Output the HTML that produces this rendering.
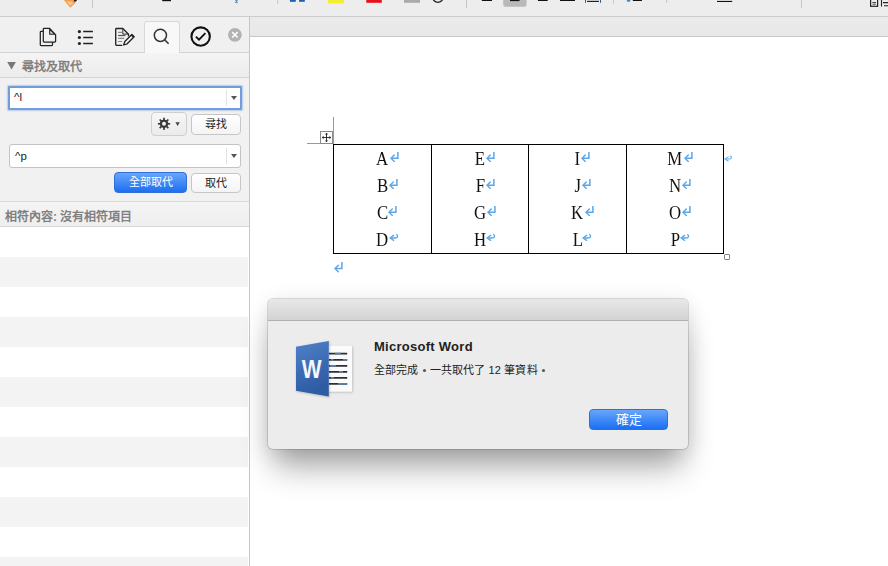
<!DOCTYPE html>
<html lang="zh-TW">
<head>
<meta charset="utf-8">
<style>
*{margin:0;padding:0;box-sizing:border-box;}
html,body{width:888px;height:566px;overflow:hidden;background:#fff;font-family:"Liberation Sans",sans-serif;}
.a{position:absolute;}
#tb{left:0;top:0;width:888px;height:17px;background:#ededed;border-bottom:1px solid #cdcdcd;}
#side{left:0;top:17px;width:250px;height:549px;background:#f1f1f1;border-right:1px solid #c6c6c6;}
#tabs{left:0;top:0;width:249px;height:36px;border-bottom:1px solid #d2d2d2;background:#f0f0f0;}
#stab{left:144px;top:4px;width:36px;height:32px;background:#f8f8f8;border:1px solid #d8d8d8;border-bottom:none;border-radius:3px 3px 0 0;}
#hdr{left:0;top:36px;width:249px;height:25px;background:linear-gradient(#f4f4f4,#ececec);border-bottom:1px solid #d4d4d4;}
#hdr .t{left:22px;top:4px;font-size:12px;font-weight:bold;color:#808080;letter-spacing:0px;}
#find{left:8px;top:69px;width:234px;height:24px;background:#fff;border:2px solid #729cdc;border-radius:1px;box-shadow:0 0 1.5px 0.5px rgba(140,175,225,0.55);}
#repl{left:9px;top:127px;width:232px;height:24px;background:#fff;border:1px solid #c4c4c4;border-radius:3px;}
.inp-t{left:5px;font-size:11.5px;color:#222;}
.sep{width:1px;background:#e2e2e2;}
.dd{width:0;height:0;border-left:3px solid transparent;border-right:3px solid transparent;border-top:4px solid #555;}
.btn{background:linear-gradient(#ffffff,#f4f4f4);border:1px solid #c6c6c6;border-radius:4px;font-size:11px;color:#222;text-align:center;}
.bbtn{background:linear-gradient(#67a6fb,#1c6ff2);border:1px solid #2f6fd6;border-radius:4px;font-size:11px;color:#fff;text-align:center;font-weight:500;}
#res{left:0;top:184px;width:249px;height:26px;background:linear-gradient(#f4f4f4,#efefef);border-top:1px solid #d9d9d9;border-bottom:1px solid #d9d9d9;}
#list{left:0;top:210px;width:249px;height:339px;background:#fff;}
#list::after{content:"";position:absolute;left:0;top:0;width:248px;height:339px;background:repeating-linear-gradient(rgba(0,0,0,0) 0,rgba(0,0,0,0) 30px,#f3f3f3 30px,#f3f3f3 60px);}
#doc{left:250px;top:17px;width:638px;height:549px;background:#fff;}
#strip{left:0;top:0;width:638px;height:20px;background:linear-gradient(#ebebeb,#e8e8e8);border-bottom:1px solid #c9c9c9;}
#dlg{left:268px;top:299px;width:420px;height:150px;background:#ececec;border-radius:5px;box-shadow:0 0 0 1px rgba(0,0,0,0.13),0 24px 30px -6px rgba(0,0,0,0.33),0 4px 22px rgba(0,0,0,0.12);overflow:hidden;}
#dtitle{left:0;top:0;width:420px;height:22px;background:linear-gradient(#e8e8e8,#d3d3d3);border-bottom:1px solid #b0b0b0;}
.cell{height:22px;text-align:center;font-family:"Liberation Serif",serif;font-size:19.5px;line-height:20px;color:#111;}
.w{position:relative;display:inline-block;}
.lt{display:inline-block;transform:scaleX(0.86);}
.pm{position:absolute;left:100%;top:1px;margin-left:1px;transform:scaleY(0.855);}
.pm2{position:absolute;left:100%;top:6px;margin-left:1px;}
.dot{display:inline-block;width:11px;height:11px;position:relative;vertical-align:-1px;}
.dot::after{content:"";position:absolute;left:4px;top:4.6px;width:3px;height:3px;border-radius:50%;background:#555;}
</style>
</head>
<body>
<div id="tb" class="a"></div>
<svg class="a" style="left:0;top:0" width="888" height="16" viewBox="0 0 888 16">
 <path d="M63.9 0L70.2 7.7L75.6 2.7L73.5 0Z" fill="#f0a052"/>
 <path d="M66.5 1.5L70.2 5.8L73.2 3L71.5 1.5Z" fill="#f8c890"/>
 <path d="M73.6 0L74.8 2.2L76.9 0.5V0Z" fill="#222"/>
 <g fill="#c6c6c6"><rect x="92" y="0" width="1" height="7.7"/><rect x="277.2" y="0" width="1" height="4"/><rect x="466" y="0" width="1" height="7.9"/><rect x="613" y="0" width="1" height="3.5"/><rect x="666.1" y="0" width="1" height="3"/><rect x="801" y="0" width="1" height="7.9"/></g>
 <rect x="162.2" y="0" width="8.8" height="1.2" fill="#111"/>
 <path d="M235 0.6H237.6L235.2 2.6H237.8" fill="none" stroke="#4a8cc8" stroke-width="0.9"/>
 <rect x="289.9" y="0" width="5.9" height="1.8" fill="#1f5fa8"/><rect x="299.1" y="0" width="5.7" height="1.8" fill="#1f5fa8"/>
 <rect x="328" y="0" width="15.8" height="3.4" fill="#f3ef2e"/>
 <rect x="366.3" y="0" width="15.5" height="2.8" fill="#e8101e"/>
 <rect x="404" y="0" width="16" height="2.8" fill="#ababab"/>
 <circle cx="437.9" cy="-3" r="5.3" fill="none" stroke="#222" stroke-width="1.3"/>
 <rect x="481.8" y="0" width="10.2" height="1" fill="#111"/>
 <rect x="503.2" y="-3" width="23.4" height="9.8" rx="2" fill="#b9b9b9"/>
 <rect x="510" y="0" width="9.5" height="1.1" fill="#111"/>
 <rect x="538" y="0" width="9.7" height="1" fill="#111"/><rect x="560" y="0" width="15" height="1" fill="#111"/>
 <rect x="585" y="0" width="1" height="2.8" fill="#3a5a86"/><rect x="600" y="0" width="1" height="2.8" fill="#3a5a86"/><rect x="587.1" y="0.8" width="11.8" height="1.2" fill="#222"/>
 <circle cx="628.6" cy="0" r="1.9" fill="#3c8ad0"/>
 <rect x="632.8" y="0" width="9.1" height="1" fill="#111"/>
 <rect x="717" y="0.9" width="15.2" height="1.1" fill="#111"/>
 <rect x="870.6" y="-2" width="7" height="8.3" fill="none" stroke="#222" stroke-width="1.2"/>
 <path d="M872.3 2.5H876M872.6 4.2H875.8" stroke="#333" stroke-width="0.9"/>
 <path d="M881.5 0V6.6M883 2.6H888M884 5.8H888" stroke="#222" stroke-width="1.1"/>
</svg>

<div id="side" class="a">
  <div id="tabs" class="a">
    <div id="stab" class="a"></div>
  </div>
  <div id="hdr" class="a"><div class="a t">尋找及取代</div></div>
  <div id="find" class="a"><div class="a inp-t" style="top:3px;left:4px">^l</div><div class="a sep" style="left:216px;top:2px;height:16px"></div><div class="a dd" style="left:221px;top:8px"></div></div>
  <div class="a btn" style="left:151px;top:95px;width:36px;height:24px;background:linear-gradient(#f7f7f7,#ebebeb);border-color:#cfcfcf;"></div>
  <div class="a btn" style="left:191px;top:97px;width:50px;height:21px;line-height:19px;">尋找</div>
  <div id="repl" class="a"><div class="a inp-t" style="top:4.5px">^p</div><div class="a sep" style="left:216px;top:3px;height:16px"></div><div class="a dd" style="left:221px;top:9px"></div></div>
  <div class="a bbtn" style="left:114px;top:155px;width:73px;height:21px;line-height:19px;">全部取代</div>
  <div class="a btn" style="left:191px;top:156px;width:50px;height:20px;line-height:18px;">取代</div>
  <div id="res" class="a"><div class="a" style="left:5px;top:5px;font-size:12px;font-weight:bold;color:#808080;">相符內容: 沒有相符項目</div></div>
  <div id="list" class="a"></div>
</div>

<!-- tab icons -->
<svg class="a" style="left:0;top:0" width="250" height="80" viewBox="0 0 250 80">
 <g fill="none" stroke="#222" stroke-width="1.25" stroke-linejoin="round">
  <path d="M43.3 31.3H41.1Q40.3 31.3 40.3 32.1V44.7Q40.3 45.5 41.1 45.5H51.7Q52.5 45.5 52.5 44.7V42.3"/>
  <path d="M44.1 28.3H49.4L55.6 34.6V41.3Q55.6 42.1 54.8 42.1H44.1Q43.3 42.1 43.3 41.3V29.1Q43.3 28.3 44.1 28.3Z"/>
 </g>
 <path d="M49.7 29.2V34.3H54.7Z" fill="#dcdcdc" stroke="#222" stroke-width="1.1" stroke-linejoin="round"/>
 <g fill="#222"><circle cx="79.4" cy="31.6" r="1.6"/><circle cx="79.4" cy="37.5" r="1.6"/><circle cx="79.4" cy="43.5" r="1.6"/></g>
 <g stroke="#222" stroke-width="1.5"><path d="M83.2 31.6H92.9M83.2 37.5H92.9M83.2 43.5H92.9"/></g>
 <path d="M121.8 45.3H116.5Q115.7 45.3 115.7 44.5V29.3Q115.7 28.5 116.5 28.5H122.8L128.5 34.3V35.8" fill="none" stroke="#222" stroke-width="1.35" stroke-linejoin="round" stroke-linecap="round"/>
 <path d="M122.8 28.8V34.1H128.2" fill="none" stroke="#333" stroke-width="1"/>
 <g stroke="#8c8c8c" stroke-width="1.2"><path d="M118.1 32.4H122.2M118.1 38.4H124.2M118.1 41.5H122"/></g>
 <path d="M118.1 35.5H125.4" stroke="#555" stroke-width="1.2"/>
 <path d="M123.6 45L124.83 41.43L131.83 34.43L134.17 36.77L127.17 43.77Z" fill="#f4f4f4" stroke="#222" stroke-width="1.3" stroke-linejoin="round"/>
 <path d="M131.3 34.9L133.7 37.3" stroke="#222" stroke-width="1.6"/>
 <circle cx="160.4" cy="35.3" r="6.1" fill="none" stroke="#333" stroke-width="1.5"/>
 <path d="M164.6 39.7L168.6 43.7" stroke="#333" stroke-width="1.6"/>
 <circle cx="200.65" cy="36.6" r="9.2" fill="none" stroke="#111" stroke-width="2.1"/>
 <path d="M195.9 36.6L199 39.6L205.4 33.2" fill="none" stroke="#111" stroke-width="1.9"/>
 <circle cx="234.9" cy="34.8" r="6.9" fill="#b3b3b3"/>
 <path d="M232.2 32.1L237.6 37.5M237.6 32.1L232.2 37.5" stroke="#fff" stroke-width="1.5"/>
 <path d="M7.2 62H15.9L11.55 69.6Z" fill="#787878"/>
</svg>
<!-- gear -->
<svg class="a" style="left:154.00px;top:114px" width="30" height="20" viewBox="0 0 30 20">
 <g transform="translate(10,9.8)" fill="#383838">
  <circle r="4.1"/>
  <rect x="-0.85" y="-6.1" width="1.7" height="3" transform="rotate(0)"/>
  <rect x="-0.85" y="-6.1" width="1.7" height="3" transform="rotate(45)"/>
  <rect x="-0.85" y="-6.1" width="1.7" height="3" transform="rotate(90)"/>
  <rect x="-0.85" y="-6.1" width="1.7" height="3" transform="rotate(135)"/>
  <rect x="-0.85" y="-6.1" width="1.7" height="3" transform="rotate(180)"/>
  <rect x="-0.85" y="-6.1" width="1.7" height="3" transform="rotate(225)"/>
  <rect x="-0.85" y="-6.1" width="1.7" height="3" transform="rotate(270)"/>
  <rect x="-0.85" y="-6.1" width="1.7" height="3" transform="rotate(315)"/>
  <circle r="2" fill="#f2f2f2"/>
 </g>
 <path d="M21.4 8.3H25.8L23.6 12Z" fill="#444"/>
</svg>
<div id="doc" class="a">
  <div id="strip" class="a"></div>
</div>

<!-- table -->
<div class="a" style="left:333px;top:117px;width:1px;height:27px;background:#9a9a9a"></div>
<div class="a" style="left:307px;top:143px;width:26px;height:1px;background:#9a9a9a"></div>
<div class="a" style="left:320px;top:131px;width:13px;height:13px;border:1px solid #8a8a8a;background:#fff"></div>
<svg class="a" style="left:321.00px;top:132px" width="11" height="11" viewBox="0 0 11 11"><path d="M5.5 1.5V9.5M1.5 5.5H9.5" stroke="#333" stroke-width="1"/><path d="M5.5 0.8L3.8 2.6H7.2Z M5.5 10.2L3.8 8.4H7.2Z M0.8 5.5L2.6 3.8V7.2Z M10.2 5.5L8.4 3.8V7.2Z" fill="#333"/></svg>
<div class="a" style="left:333px;top:144px;width:391px;height:110px;border:1.3px solid #000"></div>
<div class="a" style="left:431px;top:144px;width:1.3px;height:110px;background:#000"></div>
<div class="a" style="left:528px;top:144px;width:1.3px;height:110px;background:#000"></div>
<div class="a" style="left:626px;top:144px;width:1.3px;height:110px;background:#000"></div>
<div class="a" style="left:724px;top:254px;width:6px;height:6px;border:1px solid #888;border-radius:1px;background:#fff"></div>
<div class="a cell" style="left:333.5px;top:149px;width:98px"><span class="w"><span class="lt">A</span></span></div>
<div class="a cell" style="left:333.5px;top:176px;width:98px"><span class="w"><span class="lt">B</span></span></div>
<div class="a cell" style="left:333.5px;top:203px;width:98px"><span class="w"><span class="lt">C</span></span></div>
<div class="a cell" style="left:333.5px;top:230px;width:98px"><span class="w"><span class="lt">D</span></span></div>
<div class="a cell" style="left:431.5px;top:149px;width:97px"><span class="w"><span class="lt">E</span></span></div>
<div class="a cell" style="left:431.5px;top:176px;width:97px"><span class="w"><span class="lt">F</span></span></div>
<div class="a cell" style="left:431.5px;top:203px;width:97px"><span class="w"><span class="lt">G</span></span></div>
<div class="a cell" style="left:431.5px;top:230px;width:97px"><span class="w"><span class="lt">H</span></span></div>
<div class="a cell" style="left:528.5px;top:149px;width:98px"><span class="w"><span class="lt">I</span></span></div>
<div class="a cell" style="left:528.5px;top:176px;width:98px"><span class="w"><span class="lt">J</span></span></div>
<div class="a cell" style="left:528.5px;top:203px;width:98px"><span class="w"><span class="lt">K</span></span></div>
<div class="a cell" style="left:528.5px;top:230px;width:98px"><span class="w"><span class="lt">L</span></span></div>
<div class="a cell" style="left:626.5px;top:149px;width:97px"><span class="w"><span class="lt">M</span></span></div>
<div class="a cell" style="left:626.5px;top:176px;width:97px"><span class="w"><span class="lt">N</span></span></div>
<div class="a cell" style="left:626.5px;top:203px;width:97px"><span class="w"><span class="lt">O</span></span></div>
<div class="a cell" style="left:626.5px;top:230px;width:97px"><span class="w"><span class="lt">P</span></span></div>
<svg class="a" style="left:390.00px;top:151.1px" width="10" height="11"><path d="M7.90 1.00V7.20H1.80" fill="none" stroke="#5aa6e8" stroke-width="1.5"/><path d="M4.30 4.00L1.00 7.20L4.30 10.40" fill="none" stroke="#5aa6e8" stroke-width="1.4" stroke-linecap="round"/></svg>
<svg class="a" style="left:389.00px;top:178.1px" width="10" height="11"><path d="M7.90 1.00V7.20H1.80" fill="none" stroke="#5aa6e8" stroke-width="1.5"/><path d="M4.30 4.00L1.00 7.20L4.30 10.40" fill="none" stroke="#5aa6e8" stroke-width="1.4" stroke-linecap="round"/></svg>
<svg class="a" style="left:388.00px;top:205.1px" width="10" height="11"><path d="M7.90 1.00V7.20H1.80" fill="none" stroke="#5aa6e8" stroke-width="1.5"/><path d="M4.30 4.00L1.00 7.20L4.30 10.40" fill="none" stroke="#5aa6e8" stroke-width="1.4" stroke-linecap="round"/></svg>
<svg class="a" style="left:389.30px;top:233.3px" width="11" height="9"><path d="M1.60 5.00H6.50C9.20 5.00 9.20 1.60 7.00 1.60" fill="none" stroke="#5aa6e8" stroke-width="1.3"/><path d="M4.60 2.40L1.00 5.00L4.60 7.40" fill="none" stroke="#5aa6e8" stroke-width="1.3" stroke-linecap="round"/></svg>
<svg class="a" style="left:486.00px;top:151.1px" width="10" height="11"><path d="M7.90 1.00V7.20H1.80" fill="none" stroke="#5aa6e8" stroke-width="1.5"/><path d="M4.30 4.00L1.00 7.20L4.30 10.40" fill="none" stroke="#5aa6e8" stroke-width="1.4" stroke-linecap="round"/></svg>
<svg class="a" style="left:486.00px;top:178.1px" width="10" height="11"><path d="M7.90 1.00V7.20H1.80" fill="none" stroke="#5aa6e8" stroke-width="1.5"/><path d="M4.30 4.00L1.00 7.20L4.30 10.40" fill="none" stroke="#5aa6e8" stroke-width="1.4" stroke-linecap="round"/></svg>
<svg class="a" style="left:487.00px;top:205.1px" width="10" height="11"><path d="M7.90 1.00V7.20H1.80" fill="none" stroke="#5aa6e8" stroke-width="1.5"/><path d="M4.30 4.00L1.00 7.20L4.30 10.40" fill="none" stroke="#5aa6e8" stroke-width="1.4" stroke-linecap="round"/></svg>
<svg class="a" style="left:486.30px;top:233.3px" width="11" height="9"><path d="M1.60 5.00H6.50C9.20 5.00 9.20 1.60 7.00 1.60" fill="none" stroke="#5aa6e8" stroke-width="1.3"/><path d="M4.60 2.40L1.00 5.00L4.60 7.40" fill="none" stroke="#5aa6e8" stroke-width="1.3" stroke-linecap="round"/></svg>
<svg class="a" style="left:581.00px;top:151.1px" width="10" height="11"><path d="M7.90 1.00V7.20H1.80" fill="none" stroke="#5aa6e8" stroke-width="1.5"/><path d="M4.30 4.00L1.00 7.20L4.30 10.40" fill="none" stroke="#5aa6e8" stroke-width="1.4" stroke-linecap="round"/></svg>
<svg class="a" style="left:582.00px;top:178.1px" width="10" height="11"><path d="M7.90 1.00V7.20H1.80" fill="none" stroke="#5aa6e8" stroke-width="1.5"/><path d="M4.30 4.00L1.00 7.20L4.30 10.40" fill="none" stroke="#5aa6e8" stroke-width="1.4" stroke-linecap="round"/></svg>
<svg class="a" style="left:585.00px;top:205.1px" width="10" height="11"><path d="M7.90 1.00V7.20H1.80" fill="none" stroke="#5aa6e8" stroke-width="1.5"/><path d="M4.30 4.00L1.00 7.20L4.30 10.40" fill="none" stroke="#5aa6e8" stroke-width="1.4" stroke-linecap="round"/></svg>
<svg class="a" style="left:582.30px;top:233.3px" width="11" height="9"><path d="M1.60 5.00H6.50C9.20 5.00 9.20 1.60 7.00 1.60" fill="none" stroke="#5aa6e8" stroke-width="1.3"/><path d="M4.60 2.40L1.00 5.00L4.60 7.40" fill="none" stroke="#5aa6e8" stroke-width="1.3" stroke-linecap="round"/></svg>
<svg class="a" style="left:684.00px;top:151.1px" width="10" height="11"><path d="M7.90 1.00V7.20H1.80" fill="none" stroke="#5aa6e8" stroke-width="1.5"/><path d="M4.30 4.00L1.00 7.20L4.30 10.40" fill="none" stroke="#5aa6e8" stroke-width="1.4" stroke-linecap="round"/></svg>
<svg class="a" style="left:682.00px;top:178.1px" width="10" height="11"><path d="M7.90 1.00V7.20H1.80" fill="none" stroke="#5aa6e8" stroke-width="1.5"/><path d="M4.30 4.00L1.00 7.20L4.30 10.40" fill="none" stroke="#5aa6e8" stroke-width="1.4" stroke-linecap="round"/></svg>
<svg class="a" style="left:682.00px;top:205.1px" width="10" height="11"><path d="M7.90 1.00V7.20H1.80" fill="none" stroke="#5aa6e8" stroke-width="1.5"/><path d="M4.30 4.00L1.00 7.20L4.30 10.40" fill="none" stroke="#5aa6e8" stroke-width="1.4" stroke-linecap="round"/></svg>
<svg class="a" style="left:680.30px;top:233.3px" width="11" height="9"><path d="M1.60 5.00H6.50C9.20 5.00 9.20 1.60 7.00 1.60" fill="none" stroke="#5aa6e8" stroke-width="1.3"/><path d="M4.60 2.40L1.00 5.00L4.60 7.40" fill="none" stroke="#5aa6e8" stroke-width="1.3" stroke-linecap="round"/></svg>
<svg class="a" style="left:724.30px;top:153.5px" width="11" height="9"><path d="M1.60 5.00H5.6C7.9 5.00 7.9 2.0 5.9 2.0" fill="none" stroke="#6aaee8" stroke-width="1.1"/><path d="M4.2 2.9L1.00 5.00L4.2 7.0" fill="none" stroke="#6aaee8" stroke-width="1.1" stroke-linecap="round"/></svg>
<svg class="a" style="left:334.10px;top:261px" width="10" height="12"><path d="M7.90 1.00V7.50H1.80" fill="none" stroke="#5aa6e8" stroke-width="1.5"/><path d="M4.30 4.30L1.00 7.50L4.30 10.70" fill="none" stroke="#5aa6e8" stroke-width="1.4" stroke-linecap="round"/></svg>
<div id="dlg" class="a">
  <div id="dtitle" class="a"></div>
  <svg class="a" style="left:22.00px;top:37px" width="70" height="64" viewBox="290 336 70 64">
 <defs>
  <linearGradient id="wg" x1="0" y1="0" x2="0.3" y2="1"><stop offset="0" stop-color="#4f81c9"/><stop offset="1" stop-color="#2d5ba3"/></linearGradient>
  <filter id="ws" x="-20%" y="-20%" width="140%" height="140%"><feDropShadow dx="0.5" dy="0.8" stdDeviation="0.8" flood-color="#000" flood-opacity="0.25"/></filter>
 </defs>
 <rect x="326" y="345.8" width="26" height="45.7" fill="#fbfbfb" filter="url(#ws)"/>
 <g stroke-width="1.7">
  <path d="M328.8 353.7H347.2" stroke="#2f2f2f"/>
  <path d="M328.8 359.8H347.2" stroke="#2f2f2f"/>
  <path d="M328.8 365.8H347.2" stroke="#2f2f2f"/>
  <path d="M328.8 371.8H347.2" stroke="#2f2f2f"/>
  <path d="M328.8 377.8H347.2" stroke="#2f2f2f"/>
  <path d="M328.8 383.9H347.2" stroke="#2f2f2f"/>
  <path d="M335 353.7H341M331 359.8H333.5M343 359.8H347.2M330 365.8H336M339 371.8H343M331 377.8H334M338 383.9H347.2" stroke="#5d7fb0"/>
 </g>
 <path d="M296 346.7L328.8 341V396.4L296 390.8Z" fill="url(#wg)" filter="url(#ws)"/>
 <text x="311.6" y="378" text-anchor="middle" font-family="Liberation Sans" font-weight="bold" font-size="25" fill="#f4f6fa" transform="translate(311.6 0) scale(0.84 1) translate(-311.6 0)">W</text>
</svg>
<div class="a" style="left:106px;top:40px;font-size:13px;font-weight:bold;color:#222;letter-spacing:0.27px;">Microsoft Word</div>
  <div class="a" style="left:106px;top:62px;font-size:11px;color:#222;white-space:nowrap;letter-spacing:0.15px;">全部完成<span class="dot"></span>一共取代了 12 筆資料<span class="dot"></span></div>
  <div class="a bbtn" style="left:321px;top:110px;width:79px;height:21px;line-height:19px;font-size:13px;">確定</div>
</div>
</body>
</html>
